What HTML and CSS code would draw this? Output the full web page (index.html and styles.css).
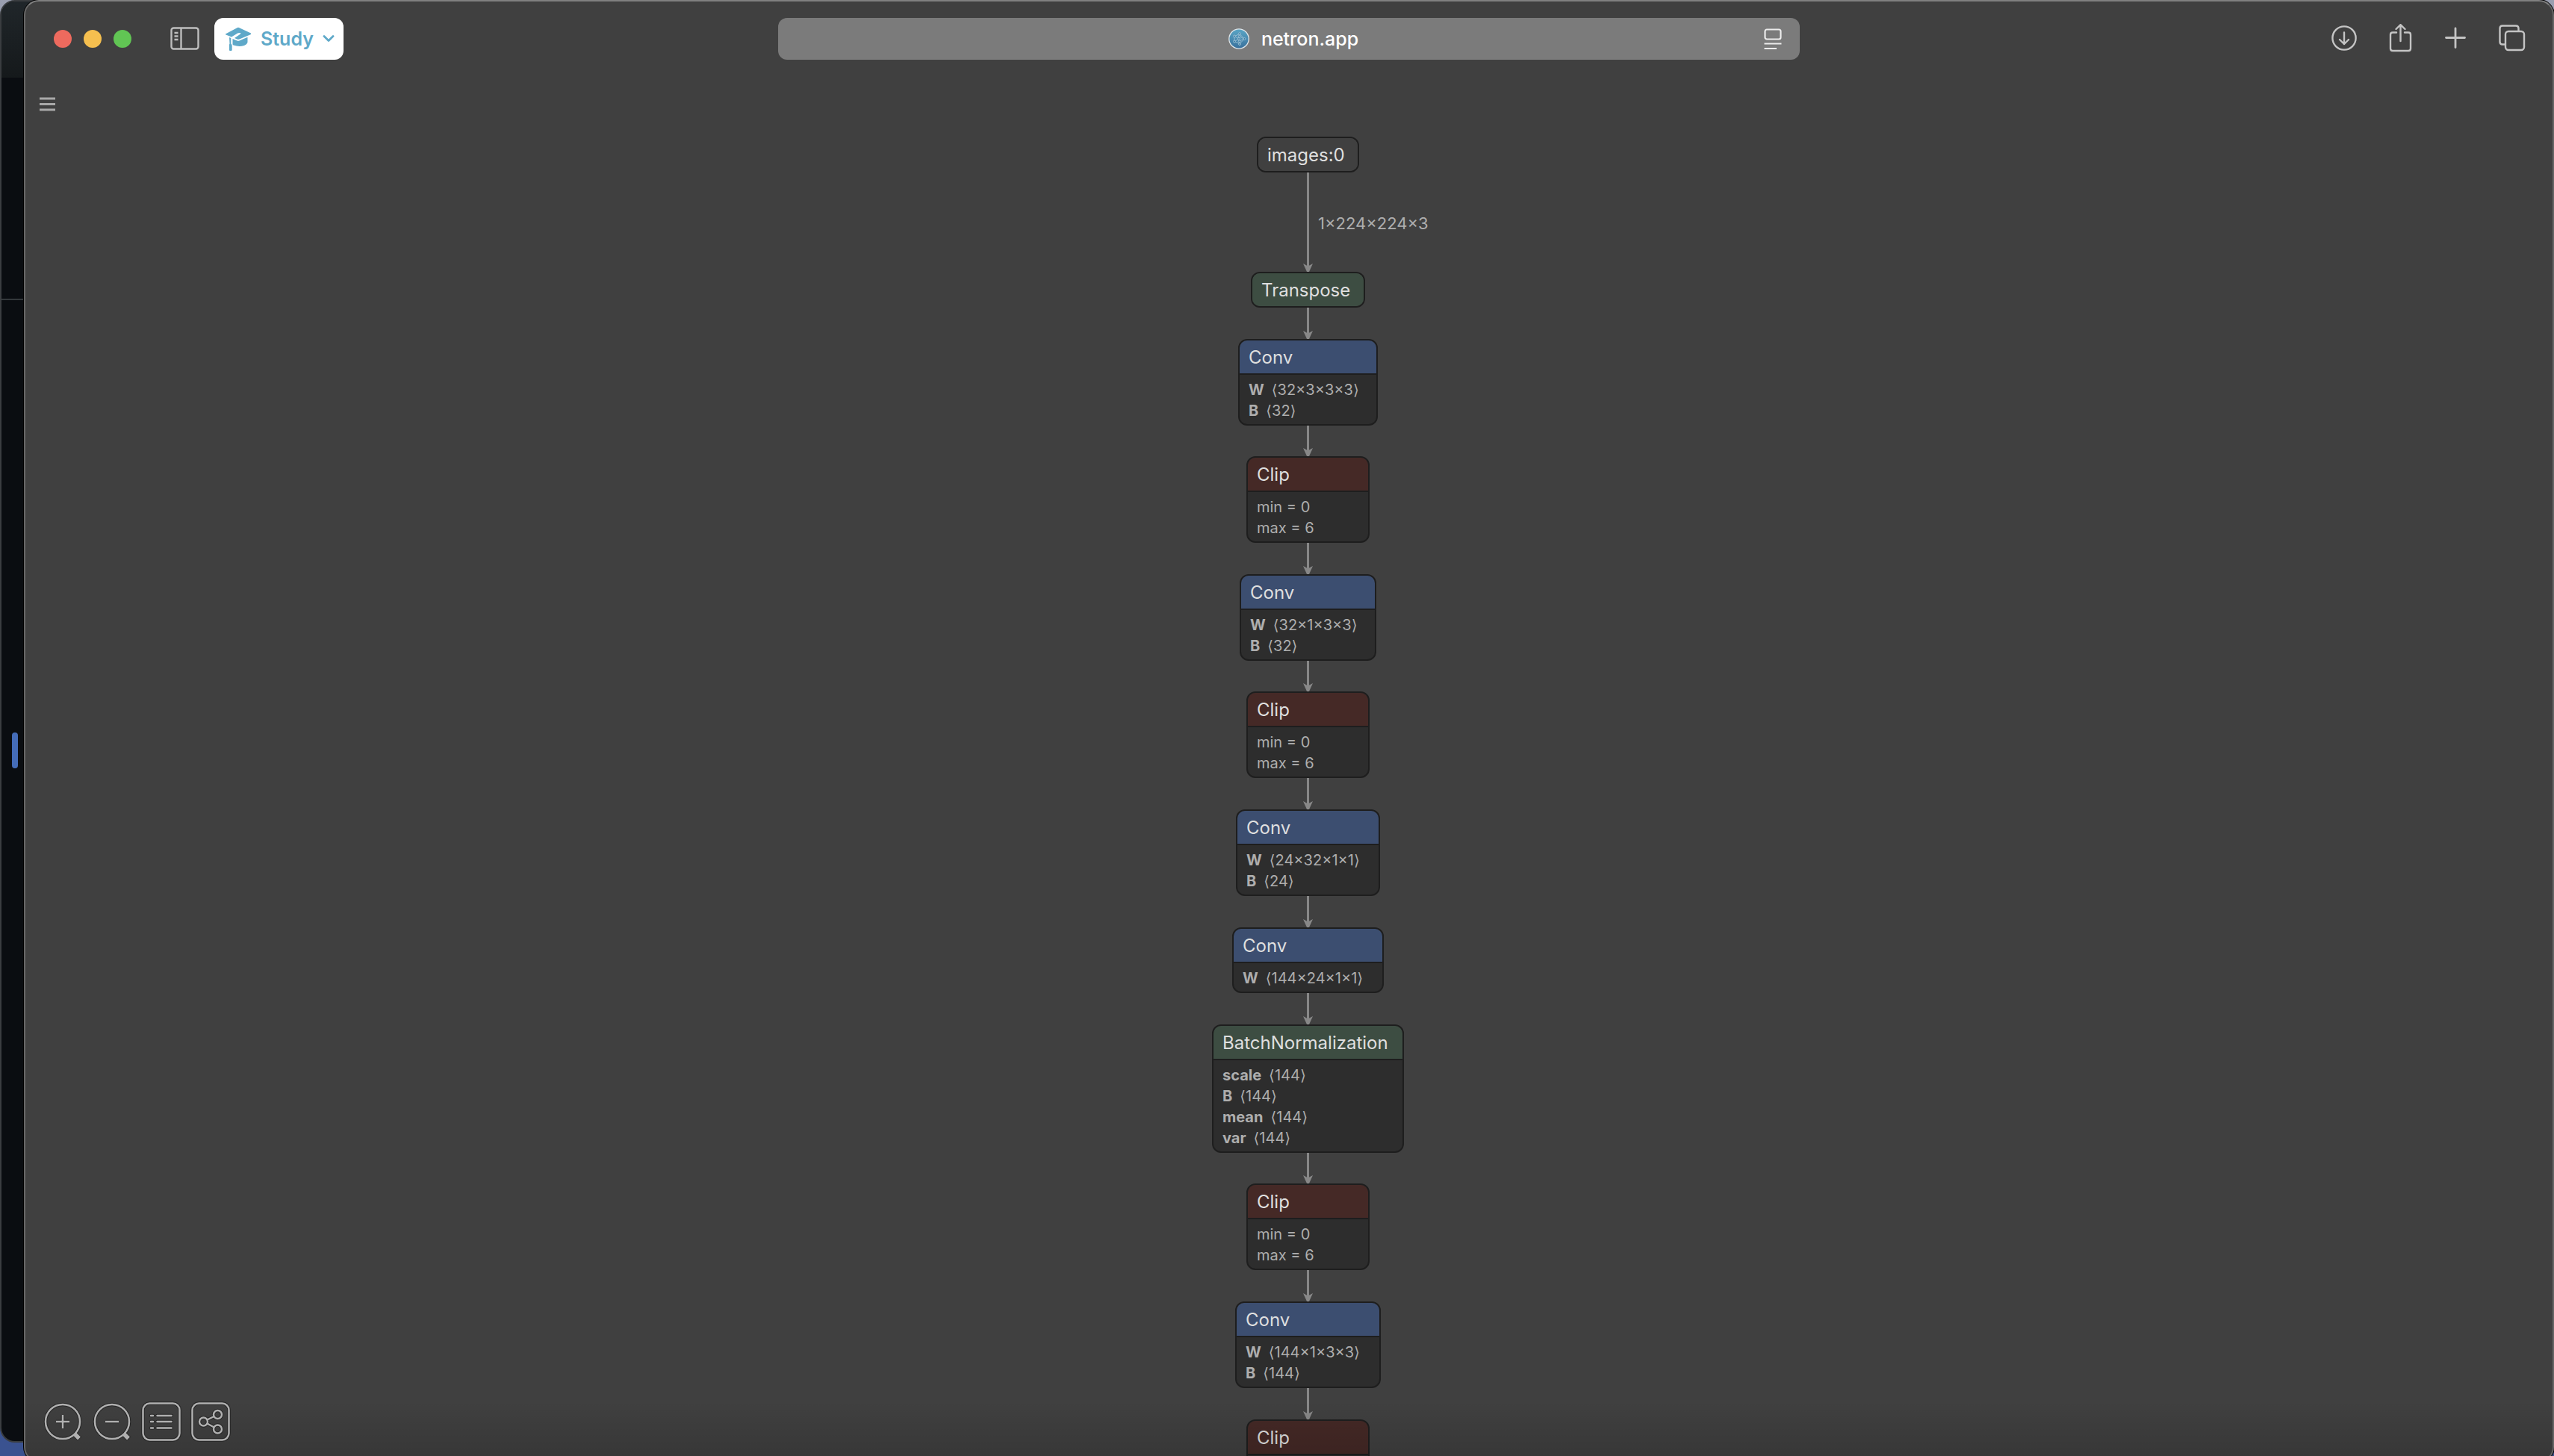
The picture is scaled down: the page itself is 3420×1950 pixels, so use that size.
FILE: index.html
```html
<!DOCTYPE html>
<html lang="en">
<head>
<meta charset="utf-8">
<title>netron.app</title>
<link rel="stylesheet" href="styles.css">
</head>
<body>
<svg class="defs" aria-hidden="true">
  <symbol id="arrow" viewBox="0 0 13 12"><path d="M0 1 L6.5 4.500 L13 1 L8 12 H5 Z"/></symbol>
</svg>

<div class="back-window" aria-hidden="true">
  <div class="back-bar"></div>
  <div class="back-pane"></div>
  <div class="back-rest"><div class="back-marker"></div></div>
</div>

<div class="window">
  <header class="toolbar">
    <div class="toolbar-start">
      <div class="lights">
        <button class="light light-close" aria-label="Close"></button>
        <button class="light light-min" aria-label="Minimize"></button>
        <button class="light light-zoom" aria-label="Zoom"></button>
      </div>
      <button class="icon-button" aria-label="Sidebar">
        <svg width="39" height="32" viewBox="0 0 39 32" fill="none" stroke="#bdbdbd" stroke-width="2.400">
          <rect x="1.500" y="1.500" width="36" height="28" rx="3"/>
          <path d="M14.500 1.500V29.500M5.500 8H10.500M5.500 12.500H10.500M5.500 17H10.500"/>
        </svg>
      </button>
      <button class="profile">
        <svg width="36" height="32" viewBox="0 0 36 32" fill="#5fa9c9">
          <path d="M1 9.500 L17 1 Q18 .5 19 1 L35 8.500 Q35.500 9.500 34.500 10.200 L19.500 16.500 Q18 17 16.500 16.500 L13 15 L21 9.500 Q22 8 20.500 8 L18 8.200 Q16.500 8.500 16 9.300 L9 13.500 L1.500 10.500 Q.5 10 1 9.500Z"/>
          <path d="M10.500 16 L16.500 18.500 Q18 19 19.500 18.500 L30.500 13.800 V20.500 Q30 23 26 25 Q19 27 11.500 24.500 L10.500 23.500Z"/>
          <path d="M6 14 L8.300 15 V22.500 Q10 23.500 9.700 26 V31 Q9.500 32 8.500 32 H7 Q6 32 6 31 V25.500 Q5.500 24 6.500 22.500Z"/>
        </svg>
        <span>Study</span>
        <svg width="16" height="10" viewBox="0 0 16 10" fill="none" stroke="#5fa9c9" stroke-width="2.800" stroke-linecap="round" stroke-linejoin="round"><path d="M2 1.500 L8 7.500 L14 1.500"/></svg>
      </button>
    </div>

    <div class="address">
      <a class="address-link" href="#">
        <svg width="28" height="28" viewBox="0 0 28 28" fill="none">
          <defs><linearGradient id="fav" x1="0" y1="0" x2="0" y2="1"><stop offset="0" stop-color="#5aa6c6"/><stop offset="1" stop-color="#39709c"/></linearGradient></defs>
          <circle cx="14" cy="14" r="13.200" fill="url(#fav)" stroke="#dfe6ea" stroke-width="1.300"/>
          <g stroke="#a5c6d8" stroke-width=".8">
            <path d="M8 10.500L15 7.500L21.500 14L15 20.500L8 17.500L14 14L8 10.500V17.500M14 14L15 7.500M14 14L15 20.500M14 10.500L21 14L14 17.500Z"/>
            <g fill="#3f7fa8"><circle cx="15" cy="7.200" r="1.500"/><circle cx="8" cy="10.500" r="1.500"/><circle cx="8" cy="17.500" r="1.500"/><circle cx="15" cy="21" r="1.500"/><circle cx="21.500" cy="14" r="1.500"/><circle cx="14" cy="14" r="1.500"/><circle cx="14.500" cy="10.700" r="1.300"/><circle cx="14.500" cy="17.300" r="1.300"/></g>
          </g>
        </svg>
        <span>netron.app</span>
      </a>
      <button class="icon-button reader" aria-label="Reader">
        <svg width="24" height="28" viewBox="0 0 24 28" fill="none" stroke="#ececec" stroke-width="2.200">
          <rect x="1.500" y="1.500" width="21" height="13" rx="2.500"/><path d="M.5 20.500H23.500M.5 27H17"/>
        </svg>
      </button>
    </div>

    <div class="toolbar-end">
      <button class="icon-button" aria-label="Downloads">
        <svg width="40" height="40" viewBox="0 0 40 40" fill="none" stroke="#c4c4c4" stroke-width="2.400" stroke-linecap="round" stroke-linejoin="round"><circle cx="20" cy="19" r="15.600"/><path d="M20 11.500V27M14 21L20 27L26 21"/></svg>
      </button>
      <button class="icon-button" aria-label="Share">
        <svg width="40" height="40" viewBox="0 0 40 40" fill="none" stroke="#c4c4c4" stroke-width="2.400" stroke-linecap="round" stroke-linejoin="round"><path d="M15 11.500H10Q7 11.500 7 14.500V33Q7 36 10 36H31Q34 36 34 33V14.500Q34 11.500 31 11.500H26M20.500 23V2M14.500 7L20.500 1.200L26.500 7"/></svg>
      </button>
      <button class="icon-button" aria-label="New tab">
        <svg width="40" height="40" viewBox="0 0 40 40" fill="none" stroke="#c4c4c4" stroke-width="2.800" stroke-linecap="round"><path d="M19 6V31.500M6.500 18.500H31.500"/></svg>
      </button>
      <button class="icon-button" aria-label="Tab overview">
        <svg width="40" height="40" viewBox="0 0 40 40" fill="none" stroke="#c4c4c4" stroke-width="2.400" stroke-linecap="round"><rect x="11" y="10" width="25" height="25" rx="4"/><path d="M28.500 9.500V6Q28.500 2.500 25 2.500H7Q3.500 2.500 3.500 6V24Q3.500 27.500 7 27.500H10.500"/></svg>
      </button>
    </div>
  </header>

  <main class="canvas">
    <button class="icon-button menu" aria-label="Menu">
      <svg width="21" height="20" viewBox="0 0 21 20" stroke="#a9a9a9" stroke-width="3"><path d="M0 2H21M0 9.500H21M0 17H21"/></svg>
    </button>

    <div class="graph">
      <div class="node input" style="width:137px"><h2>images:0</h2></div>
      <div class="edge edge-long"><svg class="arrow"><use href="#arrow"/></svg><span class="edge-label">1×224×224×3</span></div>

      <div class="node layer" style="width:153px"><h2>Transpose</h2></div>
      <div class="edge"><svg class="arrow"><use href="#arrow"/></svg></div>

      <div class="node conv" style="width:187px"><h2>Conv</h2>
        <ul><li><b>W</b><span>⟨32×3×3×3⟩</span></li><li><b>B</b><span>⟨32⟩</span></li></ul></div>
      <div class="edge edge-short"><svg class="arrow"><use href="#arrow"/></svg></div>

      <div class="node clip" style="width:165px"><h2>Clip</h2>
        <ul><li>min = 0</li><li>max = 6</li></ul></div>
      <div class="edge"><svg class="arrow"><use href="#arrow"/></svg></div>

      <div class="node conv" style="width:183px"><h2>Conv</h2>
        <ul><li><b>W</b><span>⟨32×1×3×3⟩</span></li><li><b>B</b><span>⟨32⟩</span></li></ul></div>
      <div class="edge edge-short"><svg class="arrow"><use href="#arrow"/></svg></div>

      <div class="node clip" style="width:165px"><h2>Clip</h2>
        <ul><li>min = 0</li><li>max = 6</li></ul></div>
      <div class="edge"><svg class="arrow"><use href="#arrow"/></svg></div>

      <div class="node conv" style="width:193px"><h2>Conv</h2>
        <ul><li><b>W</b><span>⟨24×32×1×1⟩</span></li><li><b>B</b><span>⟨24⟩</span></li></ul></div>
      <div class="edge"><svg class="arrow"><use href="#arrow"/></svg></div>

      <div class="node conv" style="width:203px"><h2>Conv</h2>
        <ul><li><b>W</b><span>⟨144×24×1×1⟩</span></li></ul></div>
      <div class="edge"><svg class="arrow"><use href="#arrow"/></svg></div>

      <div class="node layer" style="width:257px"><h2>BatchNormalization</h2>
        <ul><li><b>scale</b><span>⟨144⟩</span></li><li><b>B</b><span>⟨144⟩</span></li><li><b>mean</b><span>⟨144⟩</span></li><li><b>var</b><span>⟨144⟩</span></li></ul></div>
      <div class="edge edge-short"><svg class="arrow"><use href="#arrow"/></svg></div>

      <div class="node clip" style="width:165px"><h2>Clip</h2>
        <ul><li>min = 0</li><li>max = 6</li></ul></div>
      <div class="edge"><svg class="arrow"><use href="#arrow"/></svg></div>

      <div class="node conv" style="width:195px"><h2>Conv</h2>
        <ul><li><b>W</b><span>⟨144×1×3×3⟩</span></li><li><b>B</b><span>⟨144⟩</span></li></ul></div>
      <div class="edge"><svg class="arrow"><use href="#arrow"/></svg></div>

      <div class="node clip" style="width:165px"><h2>Clip</h2>
        <ul></ul></div>
    </div>

    <div class="fade"></div>

    <nav class="tools" aria-label="View">
      <button class="icon-button" aria-label="Zoom in">
        <svg width="54" height="54" viewBox="0 0 54 54" fill="none">
          <g stroke="#262626" stroke-width="4.500"><circle cx="27" cy="27" r="23"/><path d="M18 27H36M27 18V36"/></g>
          <path d="M42.500 43L49.500 50" stroke="#262626" stroke-width="7"/>
          <g stroke="#b0b0b0" stroke-width="2.500"><circle cx="27" cy="27" r="23"/><path d="M18 27H36M27 18V36"/></g>
          <path d="M43 43.500L49 49.500" stroke="#b0b0b0" stroke-width="5.500"/>
        </svg>
      </button>
      <button class="icon-button" aria-label="Zoom out">
        <svg width="54" height="54" viewBox="0 0 54 54" fill="none">
          <g stroke="#262626" stroke-width="4.500"><circle cx="27" cy="27" r="23"/><path d="M18 27H36"/></g>
          <path d="M42.500 43L49.500 50" stroke="#262626" stroke-width="7"/>
          <g stroke="#b0b0b0" stroke-width="2.500"><circle cx="27" cy="27" r="23"/><path d="M18 27H36"/></g>
          <path d="M43 43.500L49 49.500" stroke="#b0b0b0" stroke-width="5.500"/>
        </svg>
      </button>
      <button class="icon-button" aria-label="Model properties">
        <svg width="54" height="54" viewBox="0 0 54 54" fill="none">
          <g stroke="#262626" stroke-width="4.500"><rect x="2.500" y="2.500" width="49" height="49" rx="9"/><path stroke-linecap="round" d="M13 19H16M21.500 19H40.500M13 27H16M21.500 27H40.500M13 35.500H16M21.500 35.500H40.500"/></g>
          <g stroke="#b0b0b0" stroke-width="2.500"><rect x="2.500" y="2.500" width="49" height="49" rx="9"/><path stroke-linecap="round" d="M13 19H16M21.500 19H40.500M13 27H16M21.500 27H40.500M13 35.500H16M21.500 35.500H40.500"/></g>
        </svg>
      </button>
      <button class="icon-button" aria-label="Graph">
        <svg width="54" height="54" viewBox="0 0 54 54" fill="none">
          <g stroke="#262626" stroke-width="4.500"><rect x="2.500" y="2.500" width="49" height="49" rx="9"/><circle cx="17.500" cy="27" r="5.500"/><circle cx="36.500" cy="17.500" r="5.500"/><circle cx="36.500" cy="37" r="5.500"/><path d="M22.500 24.500L31.500 20M22.500 29.500L31.500 34.500"/></g>
          <g stroke="#b0b0b0" stroke-width="2.500"><rect x="2.500" y="2.500" width="49" height="49" rx="9"/><circle cx="17.500" cy="27" r="5.500"/><circle cx="36.500" cy="17.500" r="5.500"/><circle cx="36.500" cy="37" r="5.500"/><path d="M22.500 24.500L31.500 20M22.500 29.500L31.500 34.500"/></g>
        </svg>
      </button>
    </nav>
  </main>
</div>
</body>
</html>
```
FILE: styles.css
```css
* { box-sizing: border-box; }

body {
  margin: 0;
  height: 100vh;
  overflow: hidden;
  position: relative;
  font-family: Inter, "Noto Sans", "DejaVu Sans", sans-serif;
  background: linear-gradient(#9a9fb0, #3a5290 80%, #3a5290);
}

.defs { position: absolute; width: 0; height: 0; }

button {
  margin: 0;
  padding: 0;
  border: 0;
  background: none;
  font: inherit;
  color: inherit;
}

svg { display: block; }

/* window partly visible behind the browser */
.back-window {
  position: absolute;
  inset: 0 auto 18px 0;
  width: 120px;
  display: flex;
  flex-direction: column;
  background: #0a0d11;
  border: 2px solid #3a3d40;
  border-radius: 20px;
  overflow: hidden;
}
.back-bar { height: 102px; background: linear-gradient(#20262a, #15191b); }
.back-pane { height: 298px; border-bottom: 2px solid #33383b; }
.back-rest { flex: 1; padding: 579px 0 0 14px; }
.back-marker { width: 8px; height: 48px; border-radius: 4px; background: #446cb8; }

/* browser window */
.window {
  position: absolute;
  inset: 0 0 -8px 32px;
  display: flex;
  flex-direction: column;
  background: #404040;
  border: 2px solid #666;
  border-top-color: #808080;
  border-radius: 20px;
  box-shadow: 0 0 0 1px #000;
  overflow: hidden;
}

.toolbar {
  display: grid;
  grid-template-columns: 1fr 40vw 1fr;
  align-items: center;
  padding: 22px 34px;
}

.toolbar-start { display: flex; align-items: center; gap: 20px; padding-left: 4px; }
.lights { display: flex; gap: 16px; margin-right: 32px; }
.light { width: 24px; height: 24px; border-radius: 50%; }
.light-close { background: #ed6a5e; }
.light-min { background: #f5bf4f; }
.light-zoom { background: #61c554; }

.profile {
  display: flex;
  align-items: center;
  gap: 12px;
  height: 56px;
  padding: 0 12px 0 14px;
  border-radius: 12px;
  background: #fff;
  color: #5fa9c9;
  font-size: 25px;
  font-weight: 600;
}

.address {
  display: grid;
  grid-template-columns: 1fr auto 1fr;
  align-items: center;
  height: 56px;
  padding: 0 24px 0 36px;
  border-radius: 12px;
  background: #7b7b7b;
}
.address-link {
  grid-column: 2;
  display: flex;
  align-items: center;
  gap: 16px;
  color: #fff;
  font-size: 25px;
  font-weight: 500;
  text-decoration: none;
}
.reader { justify-self: end; }

.toolbar-end { display: flex; justify-content: flex-end; gap: 35px; }

.canvas {
  flex: 1;
  min-height: 0;
  position: relative;
  overflow: hidden;
}
.menu { position: absolute; left: 19px; top: 28px; }

.tools {
  position: absolute;
  left: 23px;
  bottom: 25px;
  display: flex;
  gap: 12px;
}

.fade {
  position: absolute;
  inset: auto 0 0 0;
  height: 80px;
  background: linear-gradient(rgba(0, 0, 0, 0), rgba(0, 0, 0, 0.15));
}

/* graph */
.graph {
  display: flex;
  flex-direction: column;
  align-items: center;
  padding: 81px 0 0 51px;
}

.node {
  flex: none;
  border: 2px solid #1e1e1e;
  border-radius: 12px;
  background: #2d2d2d;
  overflow: hidden;
}
.node h2 {
  margin: 0;
  padding: 2px 12px 0;
  color: #dfdfdf;
  font-size: 24px;
  font-weight: 400;
  line-height: 42px;
  white-space: nowrap;
}
.input h2 { background: #404040; }
.layer h2 { background: #3d4d42; }
.conv h2 { background: #3c4e70; }
.clip h2 { background: #452926; }

.node ul {
  margin: 0;
  padding: 6px 12px 4px;
  border-top: 2px solid #1e1e1e;
  list-style: none;
  color: #aeaeae;
  font-size: 20px;
  line-height: 28px;
  white-space: nowrap;
}
.node li { display: flex; gap: 10px; height: 28px; }
.node b { font-weight: 700; }

.edge {
  flex: none;
  position: relative;
  display: flex;
  align-items: flex-end;
  width: 13px;
  height: 42px;
  background: linear-gradient(#888, #888) center / 3px 100% no-repeat;
}
.edge-short { height: 41px; }
.edge-long { height: 133px; }
.arrow { width: 13px; height: 12px; fill: #888; }
.edge-label {
  position: absolute;
  left: 20px;
  top: 50%;
  color: #aeaeae;
  font-size: 22px;
  line-height: 28px;
  margin-top: -13px;
  white-space: nowrap;
}
```
